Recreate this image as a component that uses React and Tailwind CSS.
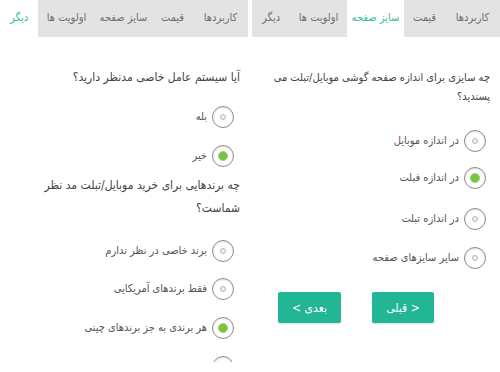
import React from "react";

const tabs = [
  { label: "کاربردها", w: "w-[55px]" },
  { label: "قیمت", w: "w-[41px]" },
  { label: "سایز صفحه", w: "w-[57px]" },
  { label: "اولویت ها", w: "w-[57px]" },
  { label: "دیگر", w: "w-[38px]" },
];

const TabBar = ({ active }) => (
  <div className="flex h-[37px]">
    {tabs.map((t) => (
      <div
        key={t.label}
        className={`${t.w} flex items-center justify-center text-[11px] ${
          t.label === active ? "bg-white text-[#35bb9c]" : "bg-[#e3e3e3] text-[#6f6f6f]"
        }`}
      >
        {t.label}
      </div>
    ))}
  </div>
);

const Radio = ({ label, checked, className = "" }) => (
  <div className={`flex items-center gap-[5px] pr-[14px] ${className}`}>
    <div className="w-[22px] h-[22px] shrink-0 rounded-full border-[1.5px] border-[#8c8c8c] bg-white flex items-center justify-center shadow-[inset_0_1px_2px_rgba(0,0,0,0.12)]">
      {checked ? (
        <div className="w-[10px] h-[10px] rounded-full bg-[#7cc242] border border-[#9ad46a]" />
      ) : (
        <div className="w-[6px] h-[6px] rounded-full border border-[#b5b5b5] bg-[#efefef]" />
      )}
    </div>
    <span className="text-[11px] text-[#555]">{label}</span>
  </div>
);

const App = () => {
  return (
    <div
      className="w-[500px] h-[372px] bg-white flex justify-between overflow-hidden"
      style={{ fontFamily: '"DejaVu Sans Condensed", "DejaVu Sans", sans-serif' }}
    >
      {/* left panel */}
      <div dir="rtl" className="w-[248px] h-[362px] overflow-hidden">
        <TabBar active="دیگر" />
        <div className="pr-[8px] mt-[31px] text-[12px] leading-[19px] text-[#444]">
          آیا سیستم عامل خاصی مدنظر دارید؟
        </div>
        <Radio label="بله" className="mt-[19px]" />
        <Radio label="خیر" checked className="mt-[17px]" />
        <div className="pr-[8px] mt-[7px] text-[12px] leading-[23px] text-[#444]">
          چه برندهایی برای خرید موبایل/تبلت مد نظر شماست؟
        </div>
        <Radio label="برند خاصی در نظر ندارم" className="mt-[20px]" />
        <Radio label="فقط برندهای آمریکایی" className="mt-[16px]" />
        <Radio label="هر برندی به جز برندهای چینی" checked className="mt-[17px]" />
        <Radio label="" className="mt-[17px]" />
      </div>

      {/* right panel */}
      <div dir="rtl" className="w-[248px]">
        <TabBar active="سایز صفحه" />
        <div className="pr-[10px] mt-[31px] text-[11px] leading-[19px] text-[#444] whitespace-nowrap">
          چه سایزی برای اندازه صفحه گوشی موبایل/تبلت می
          <br />
          پسندید؟
        </div>
        <Radio label="در اندازه موبایل" className="mt-[24px]" />
        <Radio label="در اندازه فبلت" checked className="mt-[15px]" />
        <Radio label="در اندازه تبلت" className="mt-[19px]" />
        <Radio label="سایر سایزهای صفحه" className="mt-[17px]" />
        <div className="flex gap-[31px] pr-[66px] mt-[23px]">
          <button className="w-[62px] h-[31px] rounded-[2px] bg-[#22b596] text-white text-[12px] shadow-[0_1px_2px_rgba(0,0,0,0.15)]">
            {"< قبلی"}
          </button>
          <button className="w-[63px] h-[31px] rounded-[2px] bg-[#22b596] text-white text-[12px] shadow-[0_1px_2px_rgba(0,0,0,0.15)]">
            {"بعدی >"}
          </button>
        </div>
      </div>
    </div>
  );
};

export default App;
